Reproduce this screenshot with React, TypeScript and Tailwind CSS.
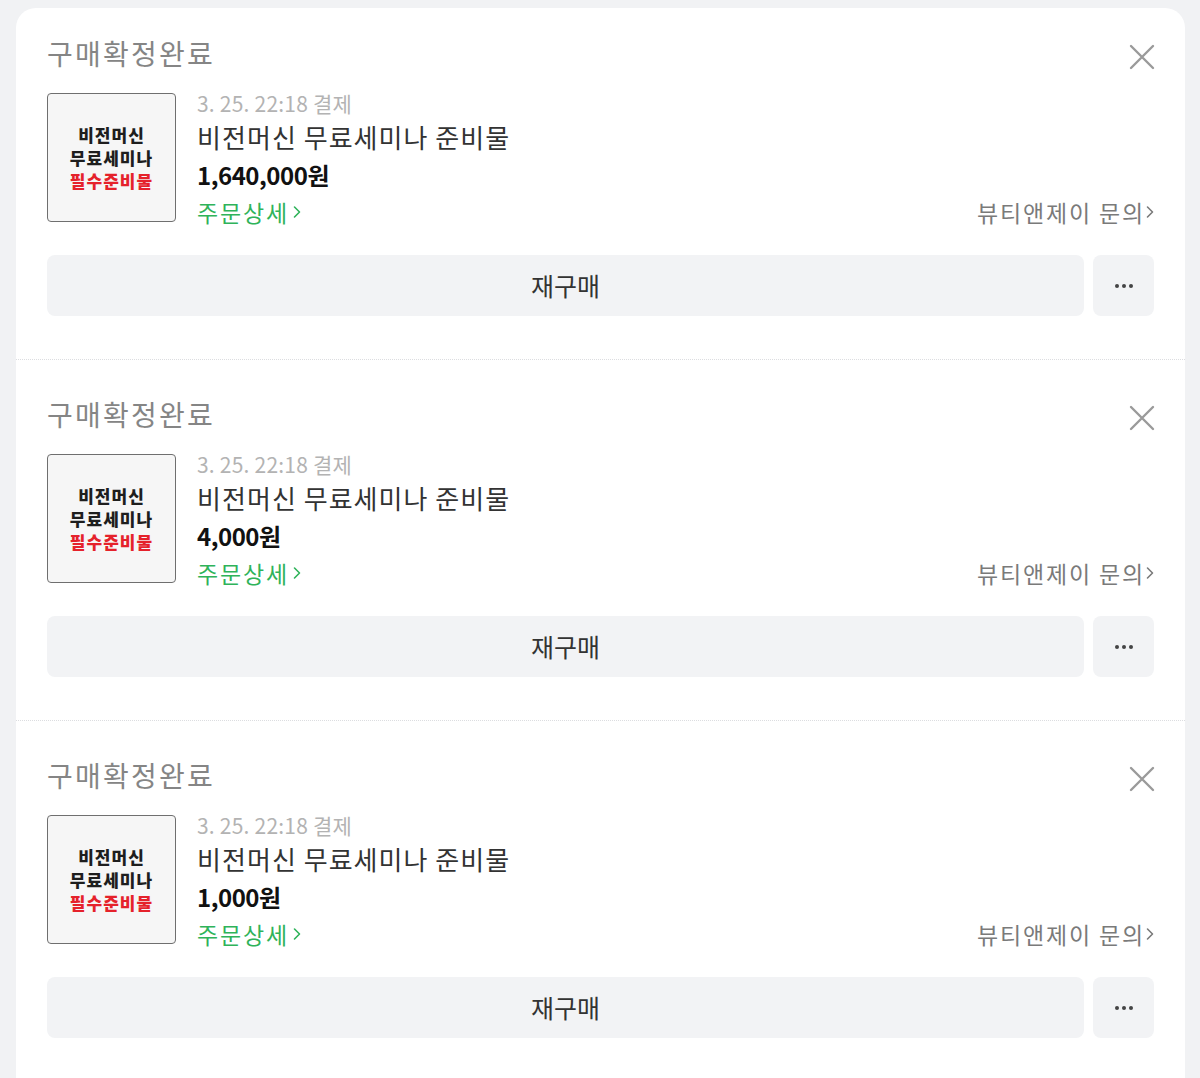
import { Fragment } from 'react'

interface Order {
	paidAt: string
	title: string
	price: string
}

const orders: Order[] = [
	{ paidAt: '3. 25. 22:18 결제', title: '비전머신 무료세미나 준비물', price: '1,640,000원' },
	{ paidAt: '3. 25. 22:18 결제', title: '비전머신 무료세미나 준비물', price: '4,000원' },
	{ paidAt: '3. 25. 22:18 결제', title: '비전머신 무료세미나 준비물', price: '1,000원' },
]

const font = { fontFamily: '"Noto Sans CJK KR", "Noto Sans", sans-serif' }

const Chevron = ({ className }: { className: string }) => (
	<svg viewBox="0 0 8 14" className={className} fill="none" stroke="currentColor" strokeWidth="1.6" strokeLinecap="round" strokeLinejoin="round">
		<path d="M1.5 2 L6.5 7 L1.5 12" />
	</svg>
)

const Thumbnail = () => (
	<div className="w-[129px] h-[129px] shrink-0 border border-[#6f6f6f] rounded-[4px] bg-[#f6f6f6] flex flex-col items-center justify-center text-[17px] leading-[23px] font-black tracking-[0.06em]">
		<span className="text-[#1e1e1e]">비전머신</span>
		<span className="text-[#1e1e1e]">무료세미나</span>
		<span className="text-[#e5222b]">필수준비물</span>
	</div>
)

const OrderCard = ({ order, first }: { order: Order; first: boolean }) => (
	<div className={first ? 'px-[31px] pt-[27px] pb-[43px]' : 'px-[31px] pt-[36px] pb-[43px] border-t border-dotted border-[#dcdde0]'}>
		<div className="flex justify-between items-start">
			<h2 className="text-[28px] leading-[36px] text-[#858585] font-normal tracking-[0.08em]">구매확정완료</h2>
			<svg viewBox="0 0 26 26" className="w-[26px] h-[26px] mt-[9px] mr-[-1px] text-[#9a9a9a]" fill="none" stroke="currentColor" strokeWidth="2.4" strokeLinecap="round">
				<path d="M2 2 L24 24 M24 2 L2 24" />
			</svg>
		</div>

		<div className="flex h-[129px] mt-[22px]">
			<Thumbnail />
			<div className="flex-1 ml-[21px] flex flex-col">
				<span className="text-[21px] leading-[20px] text-[#b3b3b3] tracking-[0.01em]">{order.paidAt}</span>
				<span className="mt-[7px] text-[26px] leading-[34px] text-[#333] tracking-[0.04em]">{order.title}</span>
				<span className="mt-[4px] text-[24px] leading-[34px] text-[#111] font-bold tracking-[-0.02em]">{order.price}</span>
				<div className="mt-[3px] flex justify-between items-center leading-[34px]">
					<a className="flex items-center text-[23px] text-[#2fb35a] tracking-[0.08em]">
						주문상세
						<Chevron className="w-[8px] h-[14px] ml-[4px]" />
					</a>
					<a className="flex items-center text-[23px] text-[#7a7a7a] tracking-[0.08em]">
						뷰티앤제이 문의
						<Chevron className="w-[8px] h-[14px] ml-[1px]" />
					</a>
				</div>
			</div>
		</div>

		<div className="flex gap-[9px] mt-[33px]">
			<button className="flex-1 h-[61px] rounded-[8px] bg-[#f2f3f5] text-[25px] text-[#333]">재구매</button>
			<button aria-label="더보기" className="w-[61px] h-[61px] rounded-[8px] bg-[#f2f3f5] flex items-center justify-center gap-[3px]">
				<span className="w-[4px] h-[4px] rounded-full bg-[#444]" />
				<span className="w-[4px] h-[4px] rounded-full bg-[#444]" />
				<span className="w-[4px] h-[4px] rounded-full bg-[#444]" />
			</button>
		</div>
	</div>
)

const App = () => {
	return (
		<div className="h-screen overflow-hidden bg-[#f1f2f4] pt-[8px] pl-[16px] pr-[15px]" style={font}>
			<div className="bg-white rounded-t-[20px] min-h-full">
				{orders.map((order, i) => (
					<Fragment key={i}>
						<OrderCard order={order} first={i === 0} />
					</Fragment>
				))}
			</div>
		</div>
	)
}

export default App
